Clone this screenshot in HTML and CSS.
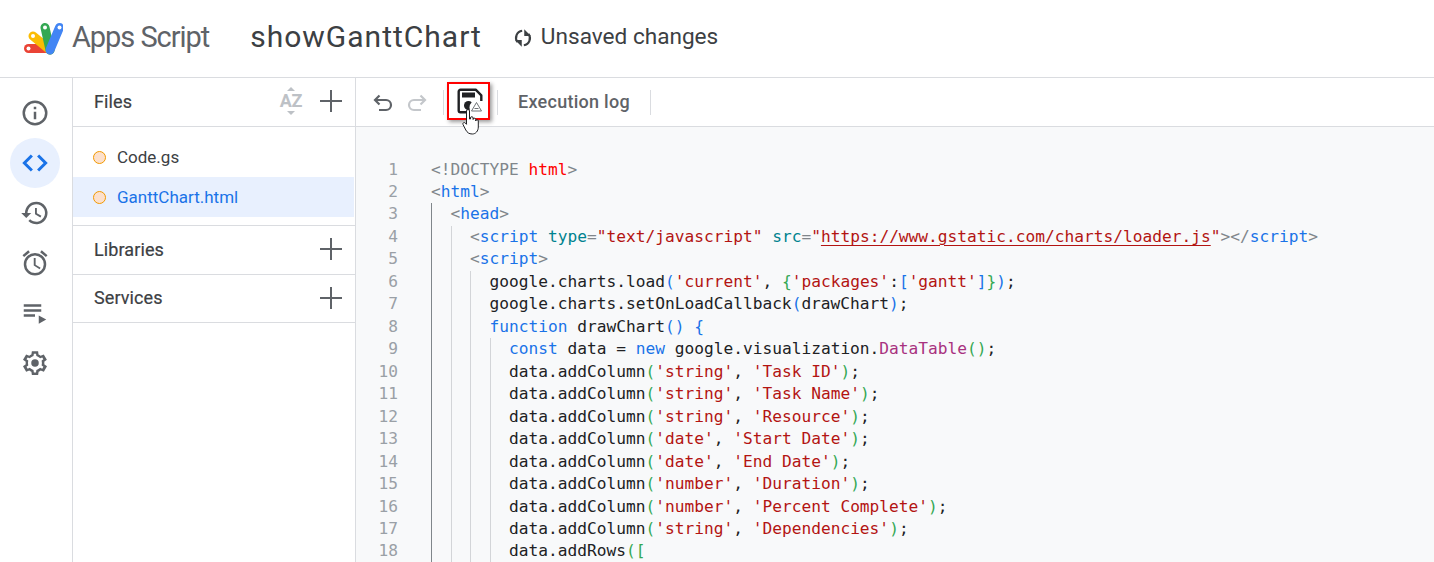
FILE: index.html
```html
<!DOCTYPE html>
<html lang="en">
<head>
<meta charset="utf-8">
<title>Apps Script</title>
<link rel="stylesheet" href="styles.css">
</head>
<body>
<header class="topbar">
  <svg class="logo" viewBox="0 0 40 34" width="40" height="34">
    <g fill="none" stroke-width="9" stroke-linecap="round">
      <path d="M5.500 27.500H27" stroke="#ea4335"/>
      <path d="M10 15L27 29" stroke="#fbbc04"/>
      <path d="M22 6.500L27 29" stroke="#34a853"/>
      <path d="M36.500 6.500L27 29" stroke="#4285f4"/>
    </g>
    <g fill="#fff">
      <circle cx="5.500" cy="27.500" r="2"/><circle cx="10" cy="15" r="2"/><circle cx="22" cy="6.500" r="2"/><circle cx="36.500" cy="6.500" r="2"/>
    </g>
  </svg>
  <span class="brand">Apps Script</span>
  <span class="project">showGanttChart</span>
  <svg class="sync" viewBox="0 0 24 24" width="20" height="20"><g fill="none" stroke="#3c4043" stroke-width="2.600"><path d="M11 3.300A8.500 8.500 0 0 0 5.500 17"/><path d="M13 20.700A8.500 8.500 0 0 0 18.500 7"/></g><path fill="#3c4043" d="M2.500 14.500h8v8zM21.500 9.500h-8v-8z"/></svg>
  <span class="status">Unsaved changes</span>
</header>
<div class="main">
  <nav class="rail">
    <span class="rail-btn"><svg viewBox="0 0 24 24" width="30" height="30"><path fill="#5f6368" d="M11 7h2v2h-2zm0 4h2v6h-2zm1-9a10 10 0 1 0 0 20 10 10 0 0 0 0-20zm0 18a8 8 0 1 1 0-16 8 8 0 0 1 0 16z"/></svg></span>
    <span class="rail-btn active"><svg viewBox="0 0 24 24" width="30" height="30"><path fill="none" stroke="#1a73e8" stroke-width="2.400" d="M9.500 6L3.500 12l6 6M14.500 6l6 6-6 6"/></svg></span>
    <span class="rail-btn"><svg viewBox="0 0 24 24" width="30" height="30"><path fill="#5f6368" d="M13 3a9 9 0 0 0-9 9H1l4 4 4-4H6a7 7 0 1 1 2.100 5L6.700 18.400A9 9 0 1 0 13 3zm-1 5v5l4.300 2.500.8-1.300-3.600-2.100V8z"/></svg></span>
    <span class="rail-btn"><svg viewBox="0 0 24 24" width="30" height="30"><path fill="#5f6368" d="M22 5.700l-4.600-3.900-1.300 1.500 4.600 3.900zM7.900 3.400L6.600 1.800 2 5.700l1.300 1.500zM12.500 8H11v6l4.700 2.900.8-1.200-4-2.400zM12 4a9 9 0 1 0 0 18 9 9 0 0 0 0-18zm0 16a7 7 0 1 1 0-14 7 7 0 0 1 0 14z"/></svg></span>
    <span class="rail-btn"><svg viewBox="0 0 24 24" width="30" height="30"><path fill="#5f6368" d="M3 5h14v2H3zm0 4h14v2H3zm0 4h9v2H3zm12 1v6.500l6-3.250z"/></svg></span>
    <span class="rail-btn"><svg viewBox="0 0 24 24" width="30" height="30"><path fill="#5f6368" fill-rule="evenodd" d="M19.400 13c.1-.3.100-.7.100-1s0-.7-.1-1l2.100-1.600-2.500-4.300-2.500 1c-.5-.4-1.100-.7-1.700-1L14.500 2.500h-5l-.4 2.600c-.6.300-1.200.6-1.700 1l-2.500-1L2.400 9.400 4.600 11c-.1.300-.1.700-.1 1s0 .7.100 1l-2.200 1.600 2.500 4.300 2.500-1c.5.400 1.100.7 1.700 1l.4 2.600h5l.4-2.600c.6-.3 1.200-.6 1.700-1l2.500 1 2.500-4.300zM17.500 12c0 .4 0 .7-.1 1l-.1 1 1.400 1-.9 1.500-1.700-.7-.8.600c-.4.300-.9.600-1.300.8l-.9.400-.3 1.900h-1.700l-.3-1.900-.9-.4c-.5-.2-.9-.5-1.300-.8l-.8-.6-1.700.7-.9-1.500 1.400-1-.1-1c0-.3-.1-.7-.1-1s0-.7.100-1l.1-1-1.400-1 .9-1.500 1.700.7.8-.6c.4-.3.900-.6 1.300-.8l.9-.4.3-1.900h1.700l.3 1.900.9.400c.5.200.9.500 1.300.8l.8.600 1.700-.7.9 1.500-1.400 1 .1 1c.1.300.1.700.1 1z"/><circle cx="12" cy="12" r="3" fill="#5f6368"/></svg></span>
  </nav>
  <aside class="sidebar">
    <div class="section files-head">
      <span class="section-title">Files</span>
      <span class="az"><svg viewBox="0 0 26 28" width="26" height="28"><path fill="#bdc1c6" d="M13 0l4 4h-8zM13 28l4-4h-8z"/></svg><b>AZ</b></span>
      <svg class="plus" viewBox="0 0 22 22" width="22" height="22"><path fill="#5f6368" d="M10 0h2v10h10v2H12v10h-2V12H0v-2h10z"/></svg>
    </div>
    <ul class="file-list">
      <li class="file"><i class="dot"></i>Code.gs</li>
      <li class="file selected"><i class="dot"></i>GanttChart.html</li>
    </ul>
    <div class="section libs">
      <span class="section-title">Libraries</span>
      <svg class="plus" viewBox="0 0 22 22" width="22" height="22"><path fill="#5f6368" d="M10 0h2v10h10v2H12v10h-2V12H0v-2h10z"/></svg>
    </div>
    <div class="section services">
      <span class="section-title">Services</span>
      <svg class="plus" viewBox="0 0 22 22" width="22" height="22"><path fill="#5f6368" d="M10 0h2v10h10v2H12v10h-2V12H0v-2h10z"/></svg>
    </div>
  </aside>
  <section class="editor">
    <div class="toolbar">
      <svg class="undo" viewBox="0 0 24 24" width="24" height="24"><path fill="none" stroke="#5f6368" stroke-width="2.200" d="M8.500 4.500L4 9l4.500 4.500M4 9h11a5 5 0 0 1 0 10H8"/></svg>
      <svg class="redo" viewBox="0 0 24 24" width="24" height="24"><path fill="none" stroke="#c4c7cb" stroke-width="2.200" d="M15.500 4.500L20 9l-4.500 4.500M20 9H9a5 5 0 0 0 0 10h7"/></svg>
      <i class="tool-sep sep1"></i>
      <span class="save">
        <svg viewBox="0 0 26 26" width="26" height="26">
          <path fill="none" stroke="#202124" stroke-width="2.400" stroke-linejoin="round" d="M12 24.300H3.500a1.800 1.800 0 0 1-1.800-1.800V3.500a1.800 1.800 0 0 1 1.800-1.800h15.200l5.600 5.600V13"/>
          <path fill="#202124" d="M5 4.500h13v5H5z"/>
          <circle cx="11.500" cy="17.500" r="4.500" fill="#202124"/>
          <circle cx="19.500" cy="19.500" r="7" fill="#fff"/>
          <path fill="none" stroke="#5f6368" stroke-width=".9" stroke-linejoin="round" d="M19.500 14.500l5 8.500h-10zM17.500 20.500h4"/>
        </svg>
      </span>
      <i class="tool-sep sep2"></i>
      <span class="exec">Execution log</span>
      <i class="tool-sep sep3"></i>
      <svg class="cursor" viewBox="0 0 18 26" width="18" height="26"><path fill="#fff" stroke="#202124" stroke-width="1" stroke-linejoin="round" d="M4.500 2a1.500 1.500 0 0 1 3 0v8l1 0V9a1.300 1.300 0 0 1 2.600 0v1.500a1.300 1.300 0 0 1 2.600 0V12a1.300 1.300 0 0 1 2.600 0v6c0 4-2.600 7-6 7-3.500 0-5-1.500-6.500-4L1 15.500c-.7-1.500 1.200-2.700 2.300-1.500l1.200 1.300z"/></svg>
    </div>
    <div class="code-area">
      <ol class="gutter">
        <li>1</li><li>2</li><li>3</li><li>4</li><li>5</li><li>6</li><li>7</li><li>8</li><li>9</li><li>10</li><li>11</li><li>12</li><li>13</li><li>14</li><li>15</li><li>16</li><li>17</li><li>18</li>
      </ol>
      <div class="code">
        <div class="ln"><span class="g">&lt;!DOCTYPE </span><span class="red">html</span><span class="g">&gt;</span></div>
        <div class="ln"><span class="g">&lt;</span><span class="k">html</span><span class="g">&gt;</span></div>
        <div class="guide dark">
          <div class="ln"><span class="g">&lt;</span><span class="k">head</span><span class="g">&gt;</span></div>
          <div class="guide">
            <div class="ln"><span class="g">&lt;</span><span class="k">script</span> <span class="a">type</span><span class="g">=</span><span class="s">"text/javascript"</span> <span class="a">src</span><span class="g">=</span><span class="s">"<u>https://www.gstatic.com/charts/loader.js</u>"</span><span class="g">&gt;&lt;/</span><span class="k">script</span><span class="g">&gt;</span></div>
            <div class="ln"><span class="g">&lt;</span><span class="k">script</span><span class="g">&gt;</span></div>
            <div class="guide">
              <div class="ln">google.charts.load<span class="k">(</span><span class="s">'current'</span>, <span class="b2">{</span><span class="s">'packages'</span>:<span class="k">[</span><span class="s">'gantt'</span><span class="k">]</span><span class="b2">}</span><span class="k">)</span>;</div>
              <div class="ln">google.charts.setOnLoadCallback<span class="k">(</span>drawChart<span class="k">)</span>;</div>
              <div class="ln"><span class="k">function</span> drawChart<span class="k">()</span> <span class="k">{</span></div>
              <div class="guide">
                <div class="ln"><span class="k">const</span> data = <span class="k">new</span> google.visualization.<span class="m">DataTable</span><span class="b2">()</span>;</div>
                <div class="ln">data.addColumn<span class="b2">(</span><span class="s">'string'</span>, <span class="s">'Task ID'</span><span class="b2">)</span>;</div>
                <div class="ln">data.addColumn<span class="b2">(</span><span class="s">'string'</span>, <span class="s">'Task Name'</span><span class="b2">)</span>;</div>
                <div class="ln">data.addColumn<span class="b2">(</span><span class="s">'string'</span>, <span class="s">'Resource'</span><span class="b2">)</span>;</div>
                <div class="ln">data.addColumn<span class="b2">(</span><span class="s">'date'</span>, <span class="s">'Start Date'</span><span class="b2">)</span>;</div>
                <div class="ln">data.addColumn<span class="b2">(</span><span class="s">'date'</span>, <span class="s">'End Date'</span><span class="b2">)</span>;</div>
                <div class="ln">data.addColumn<span class="b2">(</span><span class="s">'number'</span>, <span class="s">'Duration'</span><span class="b2">)</span>;</div>
                <div class="ln">data.addColumn<span class="b2">(</span><span class="s">'number'</span>, <span class="s">'Percent Complete'</span><span class="b2">)</span>;</div>
                <div class="ln">data.addColumn<span class="b2">(</span><span class="s">'string'</span>, <span class="s">'Dependencies'</span><span class="b2">)</span>;</div>
                <div class="ln">data.addRows<span class="b2">(</span><span class="b2">[</span></div>
              </div>
            </div>
          </div>
        </div>
      </div>
    </div>
  </section>
</div>
</body>
</html>
```
FILE: styles.css
```css
* { box-sizing: border-box; }
html, body { margin: 0; height: 100%; }
body { height: 562px; overflow: hidden; background: #fff; font-family: "Roboto", "Liberation Sans", sans-serif; color: #3c4043; display: flex; flex-direction: column; }

.topbar { height: 78px; flex: none; display: flex; align-items: center; border-bottom: 1px solid #dadce0; padding: 0 0 4px 23px; }
.logo { flex: none; margin-top: 2px; }
.brand { font-size: 29px; color: #5f6368; margin-left: 9px; letter-spacing: -1.050px; }
.project { font-size: 30px; color: #3c4043; margin-left: 41px; letter-spacing: 1px; }
.sync { margin-left: 31px; margin-top: 3px; }
.status { font-size: 22.600px; color: #3c4043; margin-left: 8px; }

.main { flex: 1; display: flex; min-height: 0; }
.rail { width: 73px; flex: none; border-right: 1px solid #dadce0; padding: 10px 0 0 10px; display: flex; flex-direction: column; }
.rail-btn { width: 50px; height: 50px; flex: none; display: flex; align-items: center; justify-content: center; border-radius: 50%; }
.rail-btn.active { background: #e8f0fe; }

.sidebar { width: 283px; flex: none; border-right: 1px solid #dadce0; }
.section { display: flex; align-items: center; padding: 0 13px 2px 21px; border-bottom: 1px solid #dadce0; }
.files-head { height: 49px; }
.libs { height: 49px; }
.services { height: 48px; }
.section-title { flex: 1; font-size: 18px; font-weight: 400; letter-spacing: .1px; color: #3c4043; -webkit-text-stroke: .2px #3c4043; }
.plus { display: block; }
.az { position: relative; width: 26px; height: 28px; margin-right: 16px; color: #bdc1c6; }
.az b { position: absolute; left: 0; top: 4px; width: 26px; text-align: center; font-size: 18px; line-height: 20px; font-weight: 700; letter-spacing: -.2px; }
.file-list { list-style: none; margin: 0; padding: 10px 0 8px; border-bottom: 1px solid #dadce0; }
.file { height: 40px; display: flex; align-items: center; padding-left: 20px; font-size: 17px; color: #3c4043; }
.file.selected { background: #e8f0fe; color: #1a73e8; margin-right: 1px; }
.dot { width: 13px; height: 13px; border-radius: 50%; background: #fce0cc; border: 1.500px solid #f29900; margin-right: 11px; }

.editor { flex: 1; min-width: 0; display: flex; flex-direction: column; }
.toolbar { position: relative; height: 49px; flex: none; border-bottom: 1px solid #dadce0; display: flex; align-items: center; padding-left: 15px; }
.undo { margin-right: 11px; margin-top: 1px; }
.redo { margin-top: 1px; margin-left: -1px; }
.tool-sep { width: 1px; height: 25px; background: #dadce0; flex: none; }
.sep1 { margin-left: 14px; }
.save { width: 43px; height: 38px; margin-left: 3px; margin-bottom: 2px; padding-left: 3px; flex: none; border: 2px solid #f00; box-shadow: 2px 2px 4px rgba(0,0,0,.4); display: flex; align-items: center; justify-content: center; }
.sep2 { margin-left: 7px; }
.exec { font-size: 18px; font-weight: 500; color: #5f6368; margin-left: 20px; margin-bottom: 2px; letter-spacing: .27px; }
.sep3 { margin-left: 20px; }
.cursor { position: absolute; left: 106px; top: 31px; }

.code-area { flex: 1; min-height: 0; overflow: hidden; background: #f8f9fa; display: flex; padding-top: 31.500px; font-family: "DejaVu Sans Mono", "Liberation Mono", monospace; font-size: 16.200px; line-height: 22.470px; }
.gutter { list-style: none; margin: 0; padding: 0; width: 42px; flex: none; text-align: right; color: #9aa0a6; }
.code { margin-left: 33px; color: #202124; flex: 1; }
.ln { height: 22.470px; white-space: pre; }
.guide { border-left: 1px solid #d3d5d8; padding-left: 18.500px; }
.guide.dark { border-left-color: #80868b; }
.g { color: #80868b; }
.red { color: #f00; }
.k { color: #1a73e8; }
.a { color: #00838f; }
.s { color: #b31412; }
.s u { text-decoration-thickness: 1px; text-underline-offset: 3px; }
.m { color: #a8327f; }
.b2 { color: #34a853; }
```
